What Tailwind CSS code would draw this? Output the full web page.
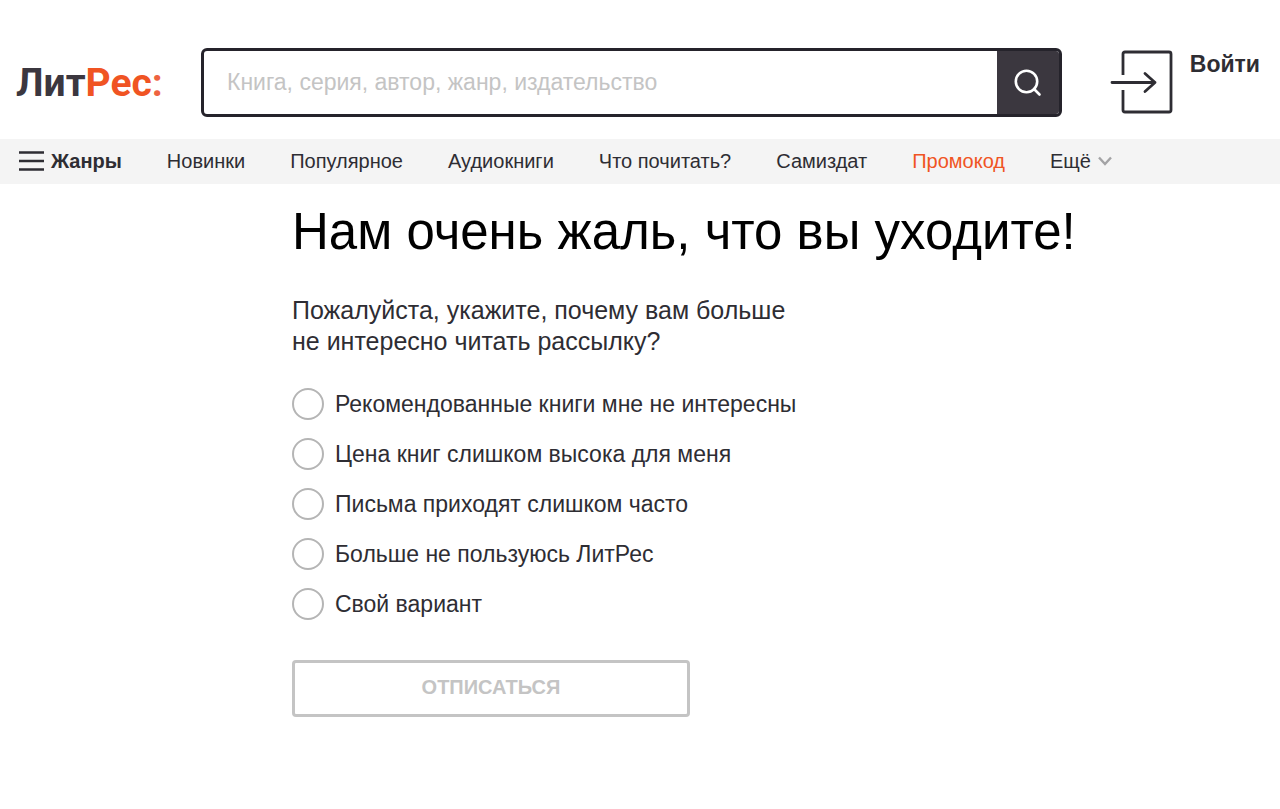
<!DOCTYPE html>
<html lang="ru">
<head>
<meta charset="utf-8">
<meta name="viewport" content="width=device-width, initial-scale=1">
<title>ЛитРес: отписка от рассылки</title>
<script src="https://cdn.jsdelivr.net/npm/@tailwindcss/browser@4"></script>
</head>
<body class="min-h-screen bg-white font-['Liberation_Sans',Arial,sans-serif] text-[#2e2d33]">
<header>
  <div class="flex items-start pt-12 pb-[22px] pl-4 pr-5">
    <a href="#" class="mt-[10px] w-[185px] shrink-0 font-[Roboto,'Noto_Sans',sans-serif] text-[39px] leading-[50px] font-bold text-[#3b373f]">Лит<span class="text-[#f05423]">Рес</span><span class="text-[#ee6340]">:</span></a>
    <form class="flex h-[69px] min-w-0 flex-1 overflow-hidden rounded-md border-3 border-[#25232b]">
      <input type="search" aria-label="Поиск" placeholder="Книга, серия, автор, жанр, издательство" class="min-w-0 flex-1 px-[23px] text-[23px] outline-none placeholder:text-[#c4c4c4]">
      <button type="button" aria-label="Найти" class="flex w-[62px] items-center justify-center bg-[#3b373f]">
        <svg class="size-7" viewBox="0 0 28 28" fill="none" stroke="#fff" stroke-width="2.6" stroke-linecap="round"><circle cx="12.500" cy="12.500" r="10.700"/><path d="M20 20l5.500 5.500"/></svg>
      </button>
    </form>
    <a href="#" class="ml-12 flex shrink-0 items-start gap-4 text-[23px] leading-7 font-bold">
      <svg class="mt-[2px] h-16 w-16" viewBox="0 0 64 64" fill="none" stroke="#2e2d33" stroke-width="2.8" stroke-linecap="round" stroke-linejoin="round"><path d="M13 25V4q0-2 2-2h44q2 0 2 2v56q0 2-2 2H15q-2 0-2-2V40" stroke-linecap="butt"/><path d="M2 32.500h43M35 23.500l10 9-10 9"/></svg>
      <span class="mt-[2px]">Войти</span>
    </a>
  </div>
  <nav aria-label="Разделы" class="flex h-[45px] items-center gap-[45px] bg-[#f4f4f4] pb-px pl-[19px] text-[20px]">
    <button type="button" class="flex items-center gap-[7px] font-bold">
      <svg class="h-5 w-[25px]" viewBox="0 0 25 20" stroke="#2e2d33" stroke-width="2.4"><path d="M0 1.500h25M0 10h25M0 18.500h25"/></svg>Жанры
    </button>
    <a href="#">Новинки</a>
    <a href="#">Популярное</a>
    <a href="#">Аудиокниги</a>
    <a href="#">Что почитать?</a>
    <a href="#">Самиздат</a>
    <a href="#" class="text-[#f05423]">Промокод</a>
    <button type="button" class="flex items-center gap-[7px]">Ещё
      <svg class="h-[10px] w-[14px]" viewBox="0 0 14 10" fill="none" stroke="#a3a3a5" stroke-width="2.400"><path d="M1 1.500l6 6.500 6-6.500"/></svg>
    </button>
  </nav>
</header>
<main class="pr-4 pb-8 pl-[292px]">
  <h1 class="pt-4 text-[51px] leading-[64px] text-black">Нам очень жаль, что вы уходите!</h1>
  <form>
    <fieldset>
      <legend class="pt-[31px] text-[25px] leading-[31px]">Пожалуйста, укажите, почему вам больше<br>не интересно читать рассылку?</legend>
      <div class="flex flex-col gap-[18px] pt-[31px] text-[23px] leading-8">
        <label class="flex items-center gap-[11px]"><input type="radio" name="reason" class="size-8 shrink-0 appearance-none rounded-full border-2 border-[#b5b5b5] checked:border-8">Рекомендованные книги мне не интересны</label>
        <label class="flex items-center gap-[11px]"><input type="radio" name="reason" class="size-8 shrink-0 appearance-none rounded-full border-2 border-[#b5b5b5] checked:border-8">Цена книг слишком высока для меня</label>
        <label class="flex items-center gap-[11px]"><input type="radio" name="reason" class="size-8 shrink-0 appearance-none rounded-full border-2 border-[#b5b5b5] checked:border-8">Письма приходят слишком часто</label>
        <label class="flex items-center gap-[11px]"><input type="radio" name="reason" class="size-8 shrink-0 appearance-none rounded-full border-2 border-[#b5b5b5] checked:border-8">Больше не пользуюсь ЛитРес</label>
        <label class="flex items-center gap-[11px]"><input type="radio" name="reason" class="size-8 shrink-0 appearance-none rounded-full border-2 border-[#b5b5b5] checked:border-8">Свой вариант</label>
      </div>
    </fieldset>
    <button type="button" class="mt-10 h-[57px] w-full max-w-[398px] rounded border-3 border-[#c4c4c4] pb-[3px] text-[20px] font-bold text-[#c4c4c4]">ОТПИСАТЬСЯ</button>
  </form>
</main>
</body>
</html>
